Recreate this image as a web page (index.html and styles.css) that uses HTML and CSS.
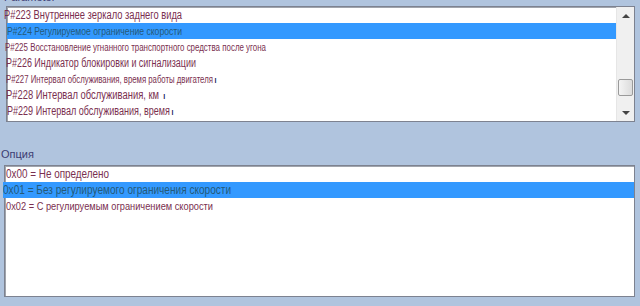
FILE: index.html
```html
<!DOCTYPE html>
<html>
<head>
    <meta charset="utf-8">
    <title>Parameter</title>
    <link rel="stylesheet" href="styles.css">
</head>
<body>
    <div id="editor">
        <div class="caption caption-top">Parameter</div>

        <!-- Parameter list with scrollbar -->
        <div class="listbox listbox-params">
            <ul class="items">
                <li class="item"><span class="txt fit-223">P#223 Внутреннее зеркало заднего вида</span></li>
                <li class="item selected"><span class="txt fit-224">P#224 Регулируемое ограничение скорости</span></li>
                <li class="item"><span class="txt fit-225">P#225 Восстановление угнанного транспортного средства после угона</span></li>
                <li class="item"><span class="txt fit-226">P#226 Индикатор блокировки и сигнализации</span></li>
                <li class="item"><span class="txt fit-227">P#227 Интервал обслуживания, время работы двигателя<i class="mark">ı</i></span></li>
                <li class="item"><span class="txt fit-228">P#228 Интервал обслуживания, км <i class="mark">ı</i></span></li>
                <li class="item"><span class="txt fit-229">P#229 Интервал обслуживания, время<i class="mark">ı</i></span></li>
            </ul>
            <div class="scrollbar">
                <div class="arrow arrow-up"></div>
                <div class="track"><div class="thumb"></div></div>
                <div class="arrow arrow-down"></div>
            </div>
        </div>

        <div class="caption caption-option">Опция</div>

        <!-- Option list -->
        <div class="listbox listbox-options">
            <ul class="items">
                <li class="item"><span class="txt fit-x00">0x00 = Не определено</span></li>
                <li class="item selected wide"><span class="txt fit-x01">0x01 = Без регулируемого ограничения скорости</span></li>
                <li class="item"><span class="txt fit-x02">0x02 = С регулируемым ограничением скорости</span></li>
            </ul>
        </div>
    </div>
</body>
</html>
```

FILE: styles.css
```css
/* Page background */
body {
    margin: 0;
    background-color: #b0c4de; /* light steel blue */
    font-family: 'Liberation Sans', Arial, sans-serif;
    font-size: 11px;
    overflow: hidden;
}

#editor {
    display: flex;
    flex-direction: column;
    padding: 0 5px 0 4px;
}

/* Section captions */
.caption {
    color: #3c3c72;
    font-size: 11px;
    line-height: 14px;
}

.caption-top {
    margin-top: -10px;
}

.caption-option {
    margin-top: 25px;
    margin-left: -3px;
    height: 18px;
}

/* List boxes */
.listbox {
    display: flex;
    background-color: #ffffff;
    border: 1px solid #7d8290;
    box-shadow: inset 1px 1px 0 #a0a4ac;
}

.listbox-params {
    margin-top: 2px;
    margin-left: 2px;
    height: 114px;
}

.listbox-options {
    height: 130px;
}

.items {
    flex: 1;
    list-style: none;
    margin: 0;
    padding: 0;
}

.item {
    height: 16px;
    line-height: 16px;
    color: #7a2f4f;
    white-space: nowrap;
}

.item.selected {
    background-color: #3399ff;
    color: #255a78;
}

.item.wide {
    margin-left: -2px;
}

/* the list was drawn with a squeezed font: each row keeps its own width */
.txt {
    display: inline-block;
    transform-origin: left center;
}

.fit-223 { margin-left: -3px; font-size: 12px; transform: scaleX(0.778); }
.fit-224 { margin-left: 0; transform: scaleX(0.784); }
.fit-225 { margin-left: -2px; font-size: 10px; transform: scaleX(0.793); }
.fit-226 { margin-left: -1px; font-size: 12px; transform: scaleX(0.746); }
.fit-227 { margin-left: -1px; font-size: 10px; transform: scaleX(0.777); }
.fit-228 { margin-left: -1px; font-size: 12px; transform: scaleX(0.783); }
.fit-229 { margin-left: 0; font-size: 12px; transform: scaleX(0.753); }

.fit-x00 { margin-left: 1px; font-size: 12px; transform: scaleX(0.825); }
.fit-x01 { margin-left: 0; font-size: 12px; transform: scaleX(0.84); }
.fit-x02 { margin-left: 1px; font-size: 10px; transform: scaleX(0.926); }

.mark {
    color: #10205a;
    font-style: normal;
    font-weight: bold;
    font-size: 9px;
    margin-left: 2px;
}

/* Scrollbar on the right of the parameter list */
.scrollbar {
    width: 17px;
    display: flex;
    flex-direction: column;
    background-color: #f0f0f0;
    border-left: 1px solid #e6e6e6;
}

.arrow {
    height: 17px;
    display: flex;
    align-items: center;
    justify-content: center;
}

.arrow::after {
    content: "";
    border-left: 4px solid transparent;
    border-right: 4px solid transparent;
}

.arrow-up::after {
    border-bottom: 4px solid #444;
}

.arrow-down::after {
    border-top: 4px solid #444;
}

.track {
    flex: 1;
    display: flex;
    flex-direction: column;
    justify-content: flex-end;
    padding-bottom: 8px;
}

.thumb {
    height: 15px;
    margin: 0 1px;
    border: 1px solid #9a9a9a;
    border-radius: 2px;
    background: linear-gradient(to right, #f4f4f4, #dcdcdc);
}
```
